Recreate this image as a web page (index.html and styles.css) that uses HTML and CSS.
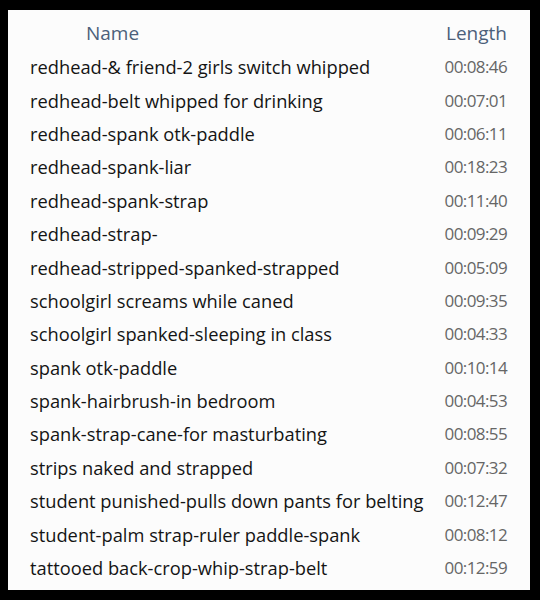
FILE: index.html
```html
<!DOCTYPE html>
<html lang="en">
<head>
    <meta charset="UTF-8">
    <title>Media list</title>
    <link rel="stylesheet" href="styles.css">
</head>
<body>
    <div class="panel">
        <div class="header">
            <span class="col-name">Name</span>
            <span class="col-length">Length</span>
        </div>
        <div class="row"><span class="name">redhead-&amp; friend-2 girls switch whipped</span><span class="time">00:08:46</span></div>
        <div class="row"><span class="name">redhead-belt whipped for drinking</span><span class="time">00:07:01</span></div>
        <div class="row"><span class="name">redhead-spank otk-paddle</span><span class="time">00:06:11</span></div>
        <div class="row"><span class="name">redhead-spank-liar</span><span class="time">00:18:23</span></div>
        <div class="row"><span class="name">redhead-spank-strap</span><span class="time">00:11:40</span></div>
        <div class="row"><span class="name">redhead-strap-</span><span class="time">00:09:29</span></div>
        <div class="row"><span class="name">redhead-stripped-spanked-strapped</span><span class="time">00:05:09</span></div>
        <div class="row"><span class="name">schoolgirl screams while caned</span><span class="time">00:09:35</span></div>
        <div class="row"><span class="name">schoolgirl spanked-sleeping in class</span><span class="time">00:04:33</span></div>
        <div class="row"><span class="name">spank otk-paddle</span><span class="time">00:10:14</span></div>
        <div class="row"><span class="name">spank-hairbrush-in bedroom</span><span class="time">00:04:53</span></div>
        <div class="row"><span class="name">spank-strap-cane-for masturbating</span><span class="time">00:08:55</span></div>
        <div class="row"><span class="name">strips naked and strapped</span><span class="time">00:07:32</span></div>
        <div class="row"><span class="name">student punished-pulls down pants for belting</span><span class="time">00:12:47</span></div>
        <div class="row"><span class="name">student-palm strap-ruler paddle-spank</span><span class="time">00:08:12</span></div>
        <div class="row"><span class="name">tattooed back-crop-whip-strap-belt</span><span class="time">00:12:59</span></div>
    </div>
</body>
</html>
```

FILE: styles.css
```css
body {
    margin: 0;
    padding: 10px 10px 10px 8px;
    background-color: #000;
    font-family: 'Open Sans', sans-serif;
}

.panel {
    width: 522px;
    height: 580px;
    background-color: #fcfcfc;
    box-sizing: border-box;
    padding: 6px 23px 0 22px;
}

.header {
    display: flex;
    justify-content: space-between;
    align-items: center;
    height: 34px;
    font-size: 19px;
    color: #4c607a;
}

.col-name {
    padding-left: 56px;
}

.row {
    display: flex;
    justify-content: space-between;
    align-items: center;
    height: 33.4px;
}

.name {
    font-size: 18.3px;
    color: #141414;
}

.time {
    font-size: 17px;
    letter-spacing: -0.6px;
    color: #666;
}
```
